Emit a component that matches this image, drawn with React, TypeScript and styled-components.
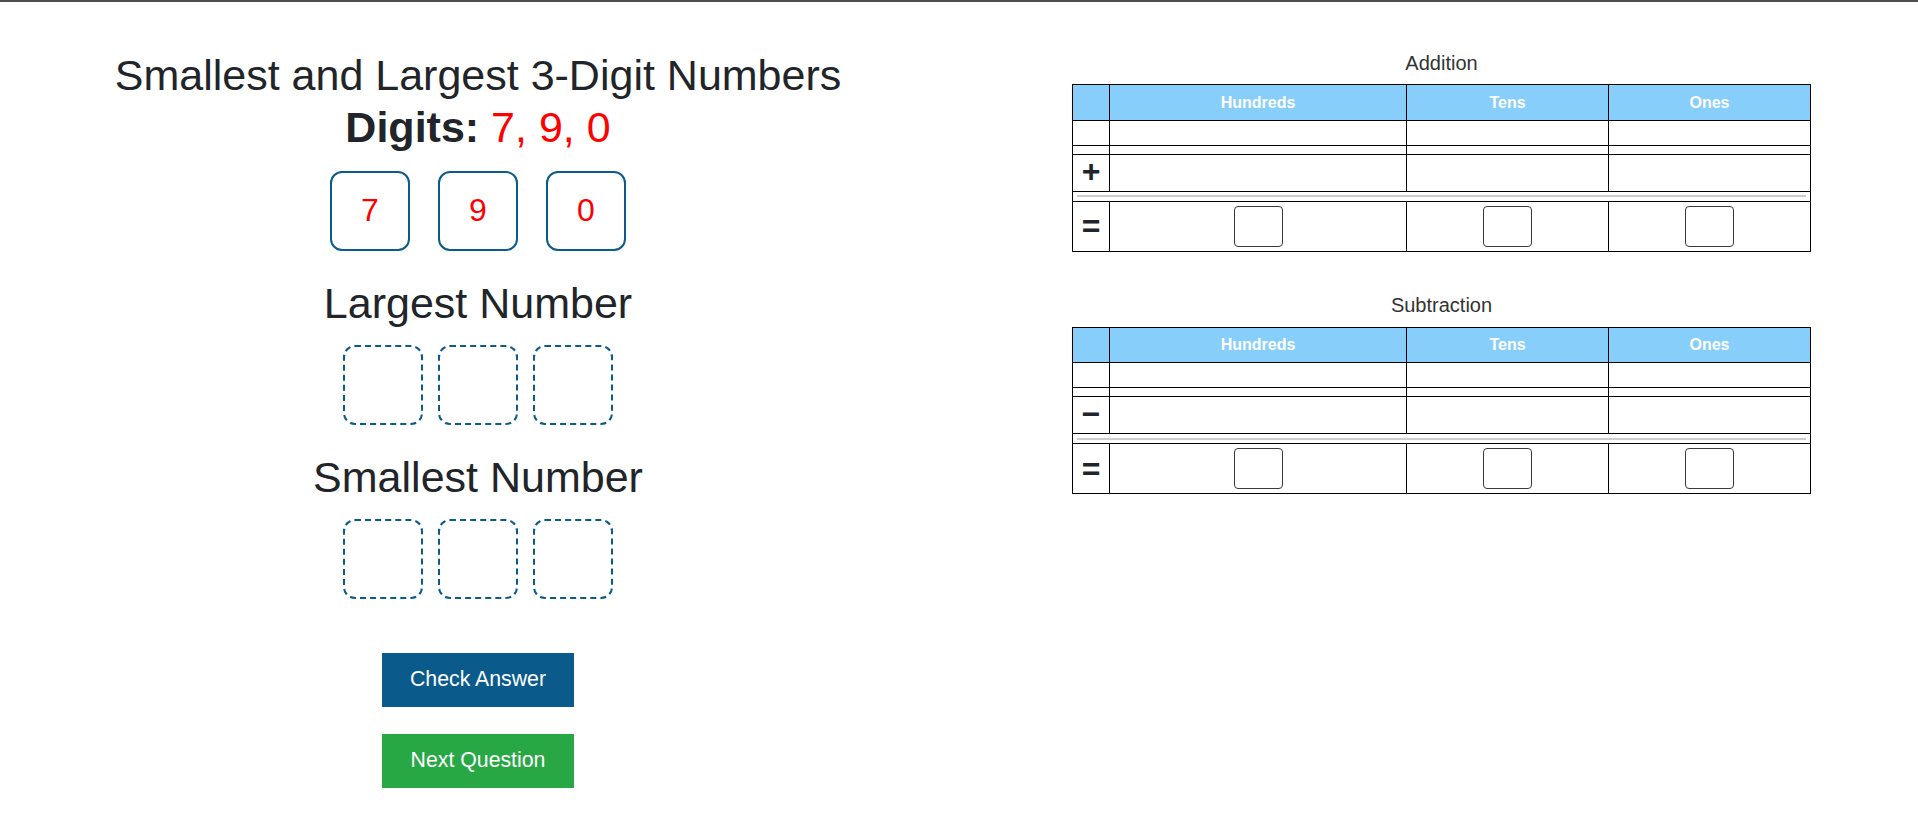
import React from 'react';
import styled, { createGlobalStyle } from 'styled-components';

const GlobalStyle = createGlobalStyle`
  html, body {
    margin: 0;
    padding: 0;
    background: #fff;
  }
  body {
    font-family: "Liberation Sans", Arial, Helvetica, sans-serif;
    color: #212529;
  }
  * {
    box-sizing: border-box;
  }
`;

const BLUE = '#0a5a8c';

const Page = styled.div`
  display: flex;
  min-height: 100vh;
  border-top: 2px solid #4f4f4f;
`;

const LeftPane = styled.div`
  width: 957px;
  display: flex;
  flex-direction: column;
  align-items: center;
  padding-top: 48px;
`;

const Title = styled.h1`
  margin: 0;
  font-size: 43px;
  font-weight: 400;
  line-height: 1.2;
  text-align: center;
`;

const DigitsLine = styled.div`
  font-size: 43px;
  line-height: 1.2;
  text-align: center;

  b {
    font-weight: 700;
  }
`;

const Red = styled.span`
  color: #ff0000;
`;

const TileRow = styled.div<{ $gap: number; $top: number }>`
  display: flex;
  gap: ${p => p.$gap}px;
  margin-top: ${p => p.$top}px;
`;

const DigitTile = styled.div`
  width: 80px;
  height: 80px;
  border: 2px solid ${BLUE};
  border-radius: 12px;
  display: flex;
  align-items: center;
  justify-content: center;
  font-size: 32px;
  color: #ff0000;
`;

const DropSlot = styled.div`
  width: 80px;
  height: 80px;
  border: 2px dashed ${BLUE};
  border-radius: 12px;
`;

const Heading = styled.h2`
  margin: 27px 0 0;
  font-size: 43px;
  font-weight: 400;
  line-height: 1.2;
  text-align: center;
`;

const ActionButton = styled.button<{ $bg: string; $top: number }>`
  width: 192px;
  height: 54px;
  margin-top: ${p => p.$top}px;
  border: none;
  border-radius: 0;
  background: ${p => p.$bg};
  color: #fff;
  font-family: inherit;
  font-size: 21.3px;
  cursor: pointer;
`;

const RightPane = styled.div`
  flex: 1;
  padding: 50px 107px 0 116px;
`;

const Section = styled.section`
  & + & {
    margin-top: 42.6px;
  }
`;

const SectionTitle = styled.div`
  font-size: 20px;
  line-height: 23px;
  text-align: center;
  color: #333;
  margin-bottom: 9.4px;
`;

const ValueTable = styled.table`
  width: 738px;
  border-collapse: collapse;
  table-layout: fixed;

  th, td {
    border: 1px solid #000;
    padding: 0;
  }
`;

const HeadCell = styled.th`
  background: #87cefa;
  color: #fff;
  font-size: 16px;
  font-weight: 700;
  text-align: center;
`;

const Row = styled.tr<{ $h: number }>`
  height: ${p => p.$h}px;

  td, th {
    height: ${p => p.$h}px;
  }
`;

const SignCell = styled.td<{ $lift?: number }>`
  font-size: 32px;
  font-weight: 700;
  line-height: 1;
  text-align: center;
  vertical-align: middle;
  padding-bottom: ${p => p.$lift ?? 0}px !important;
`;

const RuleCell = styled.td`
  padding: 0 4px !important;
  vertical-align: middle;
`;

const Rule = styled.div`
  height: 0;
  border-top: 2px solid #cdcdcd;
`;

const AnswerCell = styled.td`
  text-align: center;
  vertical-align: middle;
`;

const AnswerBox = styled.input`
  display: inline-block;
  vertical-align: middle;
  width: 49px;
  height: 41px;
  border: 1px solid #3a3a3a;
  border-radius: 4px;
  padding: 0;
  font-family: inherit;
  font-size: 20px;
  text-align: center;
  outline: none;
`;

const columns = ['Hundreds', 'Tens', 'Ones'];

function PlaceTable({ sign }: { sign: string }) {
  return (
    <ValueTable>
      <colgroup>
        <col style={{ width: 37 }} />
        <col style={{ width: 297 }} />
        <col style={{ width: 202 }} />
        <col style={{ width: 202 }} />
      </colgroup>
      <thead>
        <Row $h={35.5}>
          <HeadCell />
          {columns.map(c => (
            <HeadCell key={c}>{c}</HeadCell>
          ))}
        </Row>
      </thead>
      <tbody>
        <Row $h={25}>
          <td />
          {columns.map(c => <td key={c} />)}
        </Row>
        <Row $h={9}>
          <td />
          {columns.map(c => <td key={c} />)}
        </Row>
        <Row $h={37}>
          <SignCell $lift={3}>{sign}</SignCell>
          {columns.map(c => <td key={c} />)}
        </Row>
        <Row $h={10}>
          <RuleCell colSpan={4}>
            <Rule />
          </RuleCell>
        </Row>
        <Row $h={50}>
          <SignCell>=</SignCell>
          {columns.map(c => (
            <AnswerCell key={c}>
              <AnswerBox type="text" aria-label={c} />
            </AnswerCell>
          ))}
        </Row>
      </tbody>
    </ValueTable>
  );
}

export default function App() {
  const digits = [7, 9, 0];

  return (
    <>
      <GlobalStyle />
      <Page>
        <LeftPane>
          <Title>Smallest and Largest 3-Digit Numbers</Title>
          <DigitsLine>
            <b>Digits:</b> <Red>{digits.join(', ')}</Red>
          </DigitsLine>

          <TileRow $gap={28} $top={17.5}>
            {digits.map(d => (
              <DigitTile key={d}>{d}</DigitTile>
            ))}
          </TileRow>

          <Heading>Largest Number</Heading>
          <TileRow $gap={15} $top={15.5}>
            <DropSlot />
            <DropSlot />
            <DropSlot />
          </TileRow>

          <Heading>Smallest Number</Heading>
          <TileRow $gap={15} $top={15.5}>
            <DropSlot />
            <DropSlot />
            <DropSlot />
          </TileRow>

          <ActionButton $bg={BLUE} $top={54}>Check Answer</ActionButton>
          <ActionButton $bg="#28a745" $top={27}>Next Question</ActionButton>
        </LeftPane>

        <RightPane>
          <Section>
            <SectionTitle>Addition</SectionTitle>
            <PlaceTable sign="+" />
          </Section>
          <Section>
            <SectionTitle>Subtraction</SectionTitle>
            <PlaceTable sign="−" />
          </Section>
        </RightPane>
      </Page>
    </>
  );
}
